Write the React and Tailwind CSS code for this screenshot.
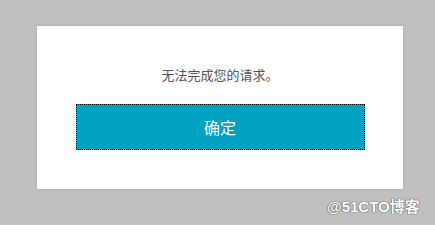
export default function App() {
  return (
    <div
      className="relative w-[435px] h-[225px] bg-[#c0c0c0] pt-[26px] pl-[37px] overflow-hidden"
      style={{ fontFamily: '"Noto Sans CJK SC", "Noto Sans", sans-serif' }}
    >
      <div className="w-[366px] h-[163px] bg-white flex flex-col items-center shadow-[0_0_3px_rgba(0,0,0,0.12)]">
        <p className="mt-[40px] text-[13px] leading-[17px] text-[#555555]">无法完成您的请求。</p>
        <button className="mt-[21px] w-[289px] h-[46px] bg-[#00a2c2] border border-dotted border-black text-white text-[16px] leading-[20px] flex items-center justify-center">
          确定
        </button>
      </div>
      <div
        className="absolute left-[327px] top-[198px] text-[15px] leading-[18px] text-white font-bold"
        style={{
          fontFamily: '"Liberation Sans", "Noto Sans CJK SC", sans-serif',
          textShadow: '0 0 1px #555, 0 0 1px #555, 0 0 1px #777',
        }}
      >
        @51CTO博客
      </div>
    </div>
  );
}
